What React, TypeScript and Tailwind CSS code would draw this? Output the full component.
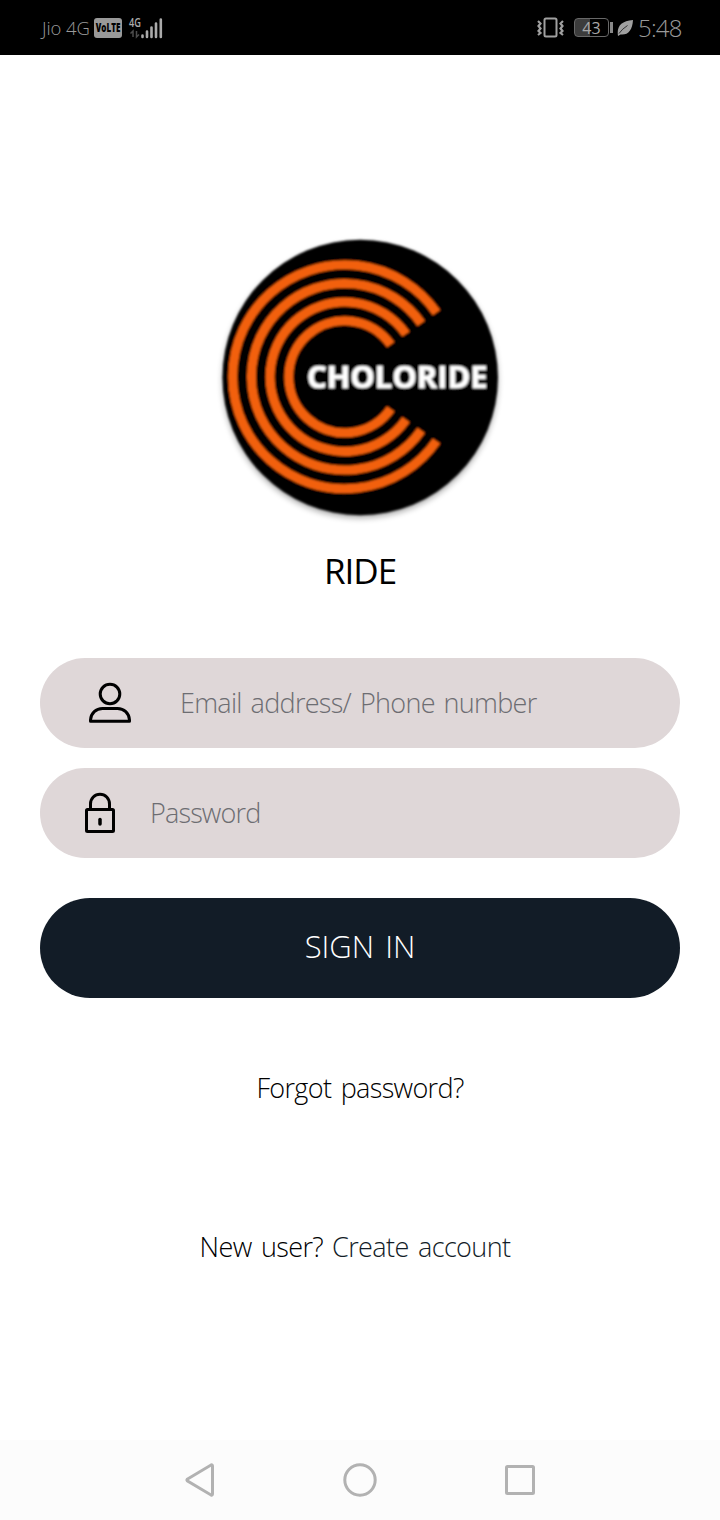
const RINGS = [
    "M91.7 -64.2 A112 112 0 1 0 91.7 64.2",
    "M76.4 -53.5 A93.3 93.3 0 1 0 76.4 53.5",
    "M61.2 -42.8 A74.7 74.7 0 1 0 61.2 42.8",
    "M45.9 -32.1 A56 56 0 1 0 45.9 32.1",
];

function StatusBar() {
    return (
        <div className="flex h-[55px] w-full shrink-0 items-center justify-between bg-black pl-[42px] pr-[38px] text-[#9a9a9a]">
            <div className="flex items-center">
                <span className="w-[49px] whitespace-nowrap text-[18.5px] font-light tracking-[-0.1px]">Jio 4G</span>
                <svg className="ml-[3px] overflow-visible" width="28" height="20" viewBox="0 0 28 20">
                    <rect width="28" height="20" rx="3" fill="#999"/>
                    <text x="1.8" y="14.2" fontSize="11.5" fontWeight="800" fill="#000" textLength="24.5"
                          lengthAdjust="spacingAndGlyphs">VoLTE</text>
                </svg>
                <svg className="ml-[7px] overflow-visible" width="34" height="24" viewBox="0 0 34 24">
                    <text x="0" y="10.5" fontSize="12.5" fontWeight="600" fill="#aaa" textLength="12"
                          lengthAdjust="spacingAndGlyphs">4G</text>
                    <path d="M4 21v-6l-2.500 2.500M7.500 15v6l2.500-2.500" fill="none" stroke="#4c4c4c" strokeWidth="1.500"/>
                    <path d="M13.500 21v-1.500M18 21v-5.500M22.500 21v-9.500M27 21v-13.500M31.800 21v-17.500" stroke="#aaa" strokeWidth="2.600"
                          strokeLinecap="round"/>
                </svg>
            </div>
            <div className="flex items-center">
                <svg width="28" height="22" viewBox="0 0 28 22" fill="none" stroke="#a0a0a0">
                    <rect x="7.500" y="1.500" width="12" height="18" rx="1.500" strokeWidth="2"/>
                    <path d="M1 4l2.500 2.500-2 2.500 2 2.500-2 2.500 2 2-2.500 2M26 4l-2.500 2.500 2 2.500-2 2.500 2 2.500-2 2 2.500 2" strokeWidth="2.200"/>
                </svg>
                <div className="ml-[9px] flex h-[19px] w-[35px] items-center justify-center rounded-[4px] border-[1.5px] border-[#686868] bg-linear-to-r from-[#3c3c3c] from-45% to-black to-45%">
                    <span className="text-[16px] text-[#a8a8a8]">43</span>
                </div>
                <div className="ml-px h-[11px] w-[3px] bg-[#888]"/>
                <svg className="ml-[4px]" width="17" height="18" viewBox="0 0 17 18">
                    <path d="M1 17C-.5 7.500 4 2 16 1C15.500 11 11 16.500 3.500 15.500Z" fill="#a0a0a0"/>
                    <path d="M2 14.500Q5 10 10.500 6.500" fill="none" stroke="#000" strokeWidth="0.700"/>
                </svg>
                <span className="ml-[4px] w-[44px] whitespace-nowrap text-[24px] font-light tracking-[-0.8px]">5:48</span>
            </div>
        </div>
    );
}

function Logo() {
    return (
        <svg className="mt-[175px] shrink-0" width="300" height="300" viewBox="0 0 300 300">
            <defs>
                <filter id="shadow">
                    <feGaussianBlur stdDeviation="3"/>
                </filter>
                <filter id="soft">
                    <feGaussianBlur stdDeviation="0.900"/>
                </filter>
            </defs>
            <circle cx="150.200" cy="150.500" r="137.500" fill="#000" opacity="0.350" filter="url(#shadow)"/>
            <g filter="url(#soft)">
                <circle cx="150.200" cy="147.500" r="137.700" fill="#000"/>
                <g transform="translate(134.800 146.800)" fill="none" stroke="#f26108" strokeWidth="9">
                    {RINGS.map((d) => <path key={d} d={d}/>)}
                </g>
                <text x="97" y="157.500" fontSize="29.500" fontWeight="700" fill="#fff" stroke="#fff" strokeWidth="0.700"
                      textLength="180.500" lengthAdjust="spacingAndGlyphs">CHOLORIDE</text>
            </g>
        </svg>
    );
}

function UserIcon() {
    return (
        <svg width="44" height="42" viewBox="0 0 44 42" fill="none" stroke="#000" strokeWidth="3">
            <circle cx="22" cy="12" r="9.800"/>
            <path d="M2.500 39.200V38C3 31 8 26.500 14.500 26.500H29.500C36 26.500 41 31 41.500 38V39.200Z" strokeLinejoin="round"/>
        </svg>
    );
}

function LockIcon() {
    return (
        <svg width="32" height="42" viewBox="0 0 32 42" fill="none" stroke="#000" strokeWidth="3">
            <rect x="2.500" y="17.500" width="27" height="22" rx="1"/>
            <path d="M6.500 17V12a9.500 9.800 0 0 1 19 0V17"/>
            <path d="M16 27.500v4.500" strokeWidth="3.500" strokeLinecap="round"/>
        </svg>
    );
}

export default function App() {
    return (
        <div className="flex h-[1520px] w-[720px] flex-col bg-white font-['Open_Sans','Noto_Sans',sans-serif]">
            <StatusBar/>
            <main className="flex grow flex-col items-center">
                <Logo/>
                <h1 className="mt-[17px] h-12 text-[35px] leading-[48px] tracking-[-1px] text-black">RIDE</h1>
                <form className="mt-[63px] flex w-[640px] flex-col">
                    <label className="flex h-[90px] items-center rounded-full bg-[#dfd7d8] pl-12">
                        <UserIcon/>
                        <input
                            className="ml-12 w-[440px] text-[27px] font-light tracking-[-0.7px] text-[#6d6d72] outline-none [word-spacing:2.500px] placeholder:text-[#6d6d72]"
                            type="text" placeholder="Email address/ Phone number"/>
                    </label>
                    <label className="mt-5 flex h-[90px] items-center rounded-full bg-[#dfd7d8] pl-11">
                        <LockIcon/>
                        <input
                            className="ml-[34px] w-[440px] text-[27px] font-light tracking-[-0.85px] text-[#6d6d72] outline-none placeholder:text-[#6d6d72]"
                            type="password" placeholder="Password"/>
                    </label>
                    <button type="button"
                            className="mt-10 h-[100px] rounded-full bg-[#121c27] pb-1 text-[31px] font-light text-white [word-spacing:3px]">SIGN IN
                    </button>
                </form>
                <a className="mt-[70px] h-10 text-[27px] leading-10 font-light tracking-[-0.65px] text-black [word-spacing:3px]">Forgot password?</a>
                <div
                    className="mt-[119px] flex h-10 gap-[9px] pr-[10px] text-[27px] leading-10 font-light tracking-[-0.62px] text-black [word-spacing:3px]">
                    <span>New user?</span>
                    <a className="text-[#121c27]">Create account</a>
                </div>
            </main>
            <nav className="flex h-20 shrink-0 items-center justify-center gap-[120px] bg-[#fcfcfc]">
                <svg width="40" height="40" viewBox="0 0 40 40" fill="none" stroke="#b2b2b2" strokeWidth="3">
                    <path d="M7.200 19.200L31 5Q32.500 4.500 32.500 6V34Q32.500 35.500 31 35L7.200 20.800Q6.500 20 7.200 19.200Z"/>
                </svg>
                <svg width="40" height="40" viewBox="0 0 40 40" fill="none" stroke="#b2b2b2" strokeWidth="3">
                    <circle cx="20" cy="20" r="15.200"/>
                </svg>
                <svg width="40" height="40" viewBox="0 0 40 40" fill="none" stroke="#b2b2b2" strokeWidth="3">
                    <rect x="6.500" y="6.500" width="27" height="27" rx="1"/>
                </svg>
            </nav>
        </div>
    );
}
